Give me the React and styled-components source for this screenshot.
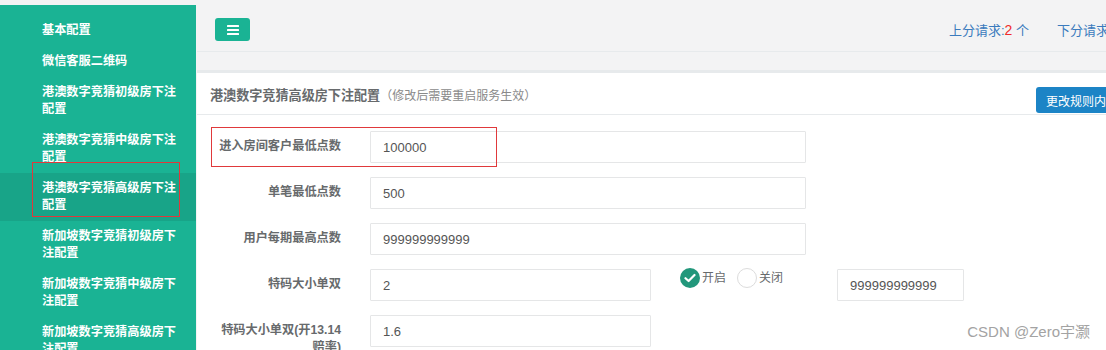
import React from 'react';
import styled, { createGlobalStyle } from 'styled-components';

const GlobalStyle = createGlobalStyle`
  html, body {
    margin: 0;
    padding: 0;
    background: #f3f3f4;
    font-family: "Liberation Sans", "Noto Sans CJK SC", Arial, sans-serif;
    overflow: hidden;
  }
`;

const Page = styled.div`
  position: relative;
  display: flex;
  width: 1106px;
  height: 350px;
  overflow: hidden;
`;

const Sidebar = styled.nav`
  flex: 0 0 196px;
  margin-top: 5px;
  padding-top: 9.5px;
  background: #1ab394;
`;

const NavItem = styled.div`
  position: relative;
  padding: 7px 12px 7px 42px;
  font-size: 12.2px;
  line-height: 17px;
  font-weight: 700;
  color: #fff;
  background: ${(p) => (p.$active ? '#18a488' : 'transparent')};
`;

const Highlight = styled.div`
  position: absolute;
  border: 1.5px solid #e0393b;
  pointer-events: none;
`;

const NavHighlight = styled(Highlight)`
  left: 32px;
  top: -10.5px;
  width: 148px;
  height: 55px;
  box-sizing: border-box;
`;

const Main = styled.main`
  flex: 0 0 946px;
  margin-left: 1px;
  display: flex;
  flex-direction: column;
  white-space: nowrap;
`;

const TopBar = styled.header`
  flex-shrink: 0;
  height: 52px;
  display: flex;
  align-items: flex-start;
  padding: 18px 6px 0 18px;
  box-sizing: border-box;
  border-bottom: 1px solid #e7eaec;
`;

const MenuButton = styled.button`
  width: 35px;
  height: 23px;
  border: 0;
  border-radius: 3px;
  background: #1ab394;
  display: flex;
  align-items: center;
  justify-content: center;
  padding: 0;
`;

const Links = styled.div`
  margin-left: auto;
  display: flex;
  gap: 28px;
  font-size: 13px;
  line-height: 24px;
  color: #3b7bbd;
`;

const Count = styled.span`
  color: #f02b2b;
  font-size: 14px;
`;

const Gap = styled.div`
  flex-shrink: 0;
  height: 18px;
`;

const Panel = styled.section`
  flex: 1 0 auto;
  background: #fff;
  border-top: 3px solid #e7eaec;
`;

const PanelHeader = styled.div`
  height: 42px;
  box-sizing: border-box;
  padding: 14px 15px 0 13px;
  display: flex;
  align-items: flex-start;
  justify-content: space-between;
  border-bottom: 1px solid #e7eaec;
`;

const Title = styled.h5`
  margin: 0;
  font-size: 13.1px;
  line-height: 17px;
  font-weight: 700;
  color: #676a6c;
`;

const Small = styled.small`
  font-size: 12px;
  font-weight: 400;
  color: #8a8a8a;
`;

const PrimaryButton = styled.button`
  height: 26px;
  padding: 0 10px;
  border: 0;
  border-radius: 3px;
  background: #1c84c6;
  color: #fff;
  font-family: inherit;
  font-size: 12px;
`;

const Form = styled.form`
  padding: 16px 0 0 13px;
  display: flex;
  flex-direction: column;
  gap: 14px;
`;

const Row = styled.div`
  position: relative;
  display: flex;
  align-items: flex-start;
`;

const RowHighlight = styled(Highlight)`
  left: 1px;
  top: -4px;
  width: 286px;
  height: 40px;
  box-sizing: border-box;
`;

const Label = styled.label`
  flex: 0 0 131px;
  margin-right: 29px;
  padding-top: 7px;
  text-align: right;
  white-space: normal;
  font-size: 12.2px;
  line-height: 17px;
  font-weight: 700;
  color: #676a6c;
`;

const Input = styled.input`
  width: ${(p) => p.$w}px;
  height: 32px;
  box-sizing: border-box;
  padding: 0 12px;
  margin-left: ${(p) => p.$ml || 0}px;
  border: 1px solid #e5e6e7;
  border-radius: 1px;
  background: #fff;
  font-family: "Liberation Sans", Arial, sans-serif;
  font-size: 13px;
  color: #555;
  outline: none;
`;

const RadioGroup = styled.div`
  display: flex;
  align-items: center;
  margin: -1px 0 0 29px;
  font-size: 12px;
  line-height: 20px;
  color: #676a6c;
`;

const RadioOption = styled.span`
  display: flex;
  align-items: center;
  gap: 2px;
  & + & {
    margin-left: 11px;
  }
`;

const Circle = styled.span`
  width: 20px;
  height: 20px;
  box-sizing: border-box;
  border-radius: 50%;
  display: flex;
  align-items: center;
  justify-content: center;
  background: ${(p) => (p.$on ? '#22977b' : '#fff')};
  border: ${(p) => (p.$on ? '0' : '1.5px solid #dcdcdc')};
`;

const Watermark = styled.div`
  position: absolute;
  right: 16px;
  top: 323px;
  font-family: "Liberation Sans", "Noto Sans CJK SC", Arial, sans-serif;
  font-size: 15px;
  line-height: 18px;
  color: #a3a3a3;
`;

const navItems = [
  '基本配置',
  '微信客服二维码',
  '港澳数字竞猜初级房下注配置',
  '港澳数字竞猜中级房下注配置',
  '港澳数字竞猜高级房下注配置',
  '新加坡数字竞猜初级房下注配置',
  '新加坡数字竞猜中级房下注配置',
  '新加坡数字竞猜高级房下注配置',
];

const Bars = () => (
  <svg width="12" height="10" viewBox="0 0 12 10">
    <rect x="0" y="0" width="12" height="2" rx="0.5" fill="#fff" />
    <rect x="0" y="4" width="12" height="2" rx="0.5" fill="#fff" />
    <rect x="0" y="8" width="12" height="2" rx="0.5" fill="#fff" />
  </svg>
);

const Check = () => (
  <svg width="12" height="10" viewBox="0 0 12 10">
    <path d="M1.5 5.2 L4.6 8 L10.5 2" fill="none" stroke="#fff" strokeWidth="2.2" strokeLinecap="round" strokeLinejoin="round" />
  </svg>
);

export default function App() {
  return (
    <>
      <GlobalStyle />
      <Page>
        <Sidebar>
          {navItems.map((t, i) => (
            <NavItem key={t} $active={i === 4}>
              {t}
              {i === 4 && <NavHighlight />}
            </NavItem>
          ))}
        </Sidebar>

        <Main>
          <TopBar>
            <MenuButton type="button">
              <Bars />
            </MenuButton>
            <Links>
              <span>
                上分请求:<Count>2</Count> 个
              </span>
              <span>
                下分请求:<Count>0</Count> 个
              </span>
            </Links>
          </TopBar>
          <Gap />
          <Panel>
            <PanelHeader>
              <Title>
                港澳数字竞猜高级房下注配置<Small>（修改后需要重启服务生效）</Small>
              </Title>
              <PrimaryButton type="button">更改规则内容</PrimaryButton>
            </PanelHeader>
            <Form>
              <Row>
                <Label>进入房间客户最低点数</Label>
                <Input $w={436} value="100000" readOnly />
                <RowHighlight />
              </Row>
              <Row>
                <Label>单笔最低点数</Label>
                <Input $w={436} value="500" readOnly />
              </Row>
              <Row>
                <Label>用户每期最高点数</Label>
                <Input $w={436} value="999999999999" readOnly />
              </Row>
              <Row>
                <Label>特码大小单双</Label>
                <Input $w={281} value="2" readOnly />
                <RadioGroup>
                  <RadioOption>
                    <Circle $on>
                      <Check />
                    </Circle>
                    开启
                  </RadioOption>
                  <RadioOption>
                    <Circle />
                    关闭
                  </RadioOption>
                </RadioGroup>
                <Input $w={127} $ml={54} value="999999999999" readOnly />
              </Row>
              <Row>
                <Label>特码大小单双(开13.14赔率)</Label>
                <Input $w={281} value="1.6" readOnly />
              </Row>
            </Form>
          </Panel>
        </Main>
        <Watermark>CSDN @Zero宇灏</Watermark>
      </Page>
    </>
  );
}
